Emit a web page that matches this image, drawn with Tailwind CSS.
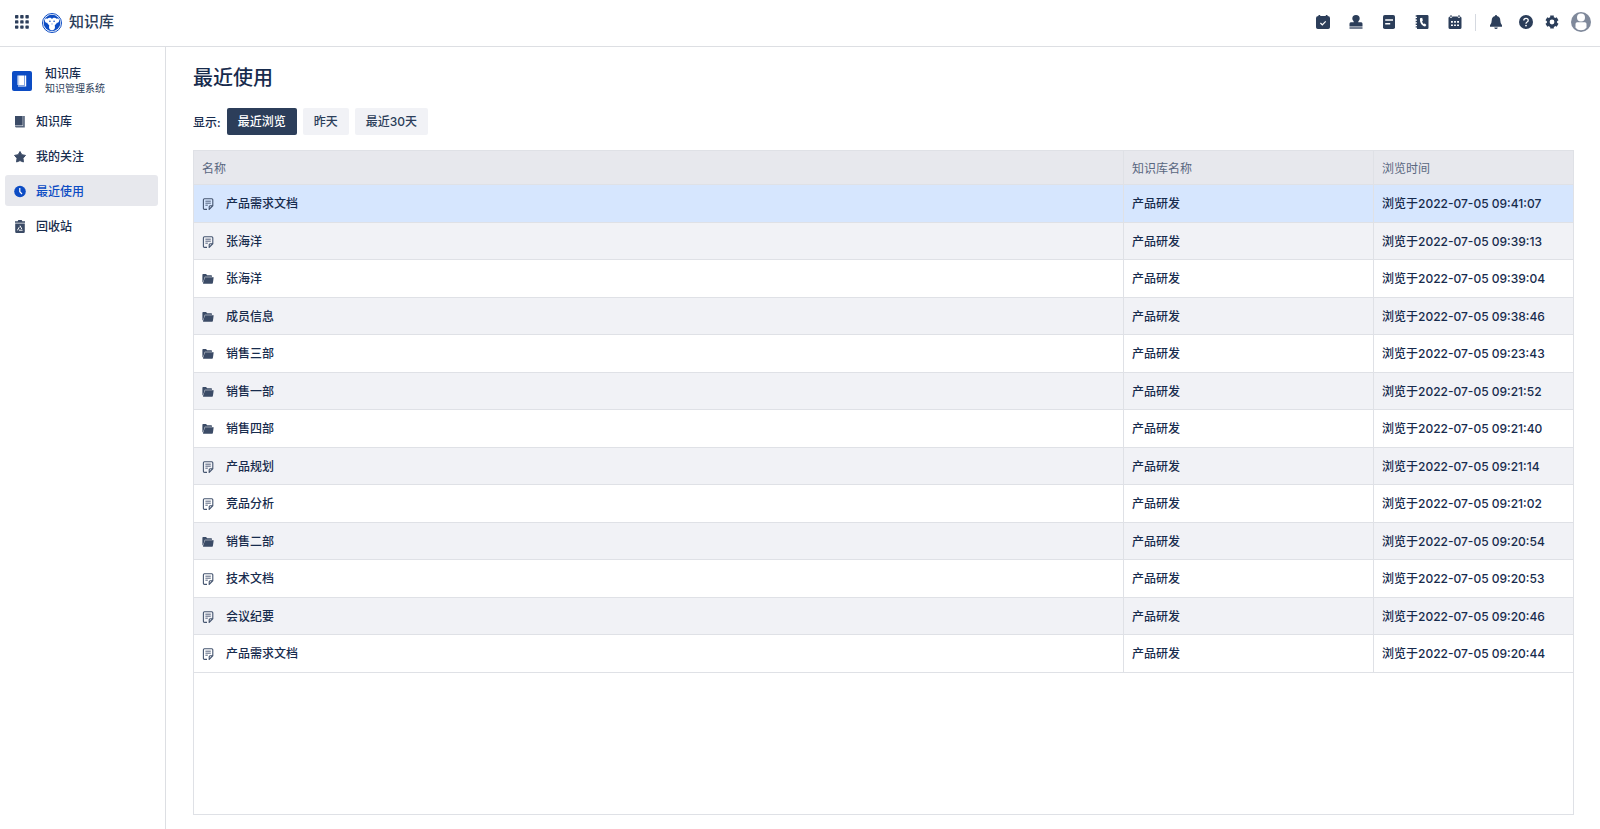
<!DOCTYPE html>
<html lang="zh">
<head>
    <meta charset="UTF-8">
    <meta name="viewport" content="width=device-width, initial-scale=1.0">
    <title>知识库 - 最近使用</title>
    <script src="https://cdn.jsdelivr.net/npm/@tailwindcss/browser@4"></script>
</head>
<body class="flex min-h-screen flex-col bg-white font-['Inter','Noto_Sans_CJK_SC',sans-serif] text-[12px] font-medium text-[#172b4d]">
    <!-- 图标 -->
    <svg class="hidden">
        <symbol id="icon-doc" viewBox="0 0 12 12">
            <path d="M5 11.400H2.600Q1.400 11.400 1.400 10.200V1.700Q1.400.7 2.400.7h7.400q1 0 1 1V7.700L7.200 11.400V8.700q0-1 1-1h2.400" fill="none" stroke="#44546f" stroke-width="1.100"/>
            <path d="M3.400 3.200h5.400M3.400 5.200h5.400M3.400 7.200h2.400" stroke="#44546f" stroke-width=".9"/>
        </symbol>
        <symbol id="icon-folder" viewBox="0 0 12 12">
            <path d="M.4 1.700Q.4 1 1.100 1H4l1.200 1.300h4q.8 0 .8.8v.7H2.800L1.300 8.500.4 9.500Z" fill="#3b4b66"/>
            <path d="M3 4.200h8.700L10.900 10q-.1.700-.8.700H1.500q-.7 0-.5-.7Z" fill="#3b4b66"/>
        </symbol>
    </svg>

    <!-- 顶部导航 -->
    <header class="flex h-[47px] shrink-0 items-center border-b border-[#dddfe3] pr-[9px] pb-[2px] pl-[15px] text-[#2c3e5a]">
        <button aria-label="应用" class="flex">
            <svg class="size-[14px]" viewBox="0 0 14 14" fill="currentColor">
                <rect x="0" y="0" width="3.400" height="3.400" rx=".7"/><rect x="5.200" y="0" width="3.400" height="3.400" rx=".7"/><rect x="10.400" y="0" width="3.400" height="3.400" rx=".7"/>
                <rect x="0" y="5.200" width="3.400" height="3.400" rx=".7"/><rect x="5.200" y="5.200" width="3.400" height="3.400" rx=".7"/><rect x="10.400" y="5.200" width="3.400" height="3.400" rx=".7"/>
                <rect x="0" y="10.400" width="3.400" height="3.400" rx=".7"/><rect x="5.200" y="10.400" width="3.400" height="3.400" rx=".7"/><rect x="10.400" y="10.400" width="3.400" height="3.400" rx=".7"/>
            </svg>
        </button>
        <a href="#" class="ml-[13px] flex items-center gap-[7px] pt-px text-[15px]">
            <svg class="size-5" viewBox="0 0 20 20">
                <circle cx="10" cy="10" r="9.500" fill="#fff" stroke="#0c4cc4" stroke-width="1"/>
                <circle cx="10" cy="10" r="8.300" fill="#0c4cc4"/>
                <path d="M10 6C9 4.300 6.600 4.200 5.500 5.800 3.900 4.900 2.700 6 2.900 7.700 3.100 9.300 4.200 10 5.200 9.700 5.600 11.200 6.900 11.600 7.300 12.500 6.600 14.500 7.200 17.300 10 17.300S13.400 14.500 12.700 12.500C13.100 11.600 14.400 11.200 14.800 9.700 15.800 10 16.900 9.300 17.100 7.700 17.300 6 16.100 4.900 14.500 5.800 13.400 4.200 11 4.300 10 6Z" fill="#fff"/>
                <circle cx="7.900" cy="8.300" r=".8" fill="#0c4cc4"/><circle cx="12.100" cy="8.300" r=".8" fill="#0c4cc4"/>
                <path d="M9.300 10.800 10 11.400l.7-.6" fill="none" stroke="#0c4cc4" stroke-width=".5"/>
            </svg>
            知识库
        </a>
        <nav class="ml-auto flex items-center">
            <div class="flex items-center gap-[19px]">
                <button aria-label="任务">
                    <svg class="size-[14px]" viewBox="0 0 14 14"><path d="M2.500 0h1.700v1h5.600V0h1.700v1.100Q14 1.300 14 3v9.200Q14 14 12.200 14H1.800Q0 14 0 12.200V3Q0 1.300 2.500 1.100Z" fill="currentColor"/><path d="m4.400 8 1.900 1.800 3.400-3.500" fill="none" stroke="#fff" stroke-width="1.200"/></svg>
                </button>
                <button aria-label="审批">
                    <svg class="size-[14px]" viewBox="0 0 14 14" fill="currentColor"><path d="M7 0a3.700 3.700 0 0 1 3.700 3.700C10.700 5.200 9.200 5.800 9.200 7.200h3Q13.500 7.200 13.500 8.700v2.800H.5V8.700Q.5 7.200 1.800 7.200h3C4.800 5.800 3.300 5.200 3.300 3.700A3.700 3.700 0 0 1 7 0Z"/><path d="M.5 12h13v2H.5Z" opacity=".65"/></svg>
                </button>
                <button aria-label="文档">
                    <svg class="size-[14px]" viewBox="0 0 14 14"><rect x="1" width="12" height="14" rx="1.800" fill="currentColor"/><path d="M3.200 5h7.800M3.200 8.700h5" stroke="#fff" stroke-width="1.400"/></svg>
                </button>
                <button aria-label="通讯录">
                    <svg class="size-[14px]" viewBox="0 0 14 14"><path d="M2 0h10.300Q13.500 0 13.500 1.200v11.600q0 1.200-1.200 1.200H2V12.600H.7v-1.400H2V10H.7V8.600H2V7.200H.7V5.800H2V4.400H.7V3H2V1.700H.7V.3H2Z" fill="currentColor"/><path d="M5 3.200C4.500 7.300 6.600 10.900 10.200 11.500l1.200-1.500-1.600-1.600-1.200.6Q7.400 8 7.100 6.200l.8-.8-.7-2.600Z" fill="#fff"/></svg>
                </button>
                <button aria-label="日历">
                    <svg class="size-[14px]" viewBox="0 0 14 14"><path d="M.5 4.800V3.200Q.5 1.400 1.700 1.400q0 1.700 1.300 1.700T4.300 1.400h5.400q0 1.700 1.300 1.700t1.300-1.700Q13.500 1.400 13.500 3.200v9.200Q13.500 14 11.900 14H2.100Q.5 14 .5 12.400Z" fill="currentColor"/><path d="M3 .2v2M11 .2v2" stroke="currentColor" stroke-width="1.300"/><path d="M3 6.900h1.900m1.200 0h1.800m1.200 0H11M3 10.200h1.900m1.200 0h1.800m1.200 0H11" stroke="#fff" stroke-width="1.600"/></svg>
                </button>
            </div>
            <span class="mx-[13px] h-[17px] w-px bg-[#d5d9e0]"></span>
            <button aria-label="通知">
                <svg class="size-[14px]" viewBox="0 0 14 14" fill="currentColor"><path d="M6.200.9V0h1.600v.9Q11.300 1.600 11.300 5.400 11.300 8.500 13 10.200V11.800H1v-1.600Q2.700 8.500 2.700 5.400 2.700 1.600 6.200.9ZM5.200 12.500h3.600Q8.500 14 7 14T5.200 12.500Z"/></svg>
            </button>
            <button aria-label="帮助" class="ml-4">
                <svg class="size-[14px]" viewBox="0 0 14 14"><circle cx="7" cy="7" r="7" fill="currentColor"/><path d="M4.800 5.500Q4.800 3.300 7 3.300t2.200 2Q9.200 6.500 8.100 7T7 8.800" fill="none" stroke="#fff" stroke-width="1.300"/><circle cx="7" cy="10.600" r=".9" fill="#fff"/></svg>
            </button>
            <button aria-label="设置" class="ml-3">
                <svg class="size-[14px]" viewBox="0 0 14 14"><g fill="none" stroke="currentColor"><circle cx="7" cy="7" r="3.800" stroke-width="2.800"/><path d="M7 .5v2.200M7 11.300v2.200M1.400 3.750l1.900 1.100M10.700 9.150l1.900 1.100M1.400 10.250l1.900-1.100M10.700 4.850l1.900-1.100" stroke-width="3.600"/></g></svg>
            </button>
            <button aria-label="我的账户" class="ml-3">
                <svg class="size-5" viewBox="0 0 20 20"><circle cx="10" cy="10" r="10" fill="#7f899b"/><circle cx="10" cy="5.500" r="4" fill="#fff"/><path d="M4.500 12q0-1.700 1.700-1.700h7.600q1.700 0 1.700 1.700v3.800Q13.500 18.300 10 18.300t-5.500-2.500Z" fill="#fff"/></svg>
            </button>
        </nav>
    </header>

    <div class="flex grow">
        <!-- 侧边栏 -->
        <aside class="w-[166px] shrink-0 border-r border-[#dddfe3] pt-[19px] pr-[7px] pl-[5px]">
            <div class="flex items-center gap-[13px] pl-[7px]">
                <svg class="size-5" viewBox="0 0 20 20"><rect width="20" height="20" rx="2" fill="#0c4cc4"/><path d="M5.500 4.500h7v9.500h-7ZM13 4.500h1.200v11H6v-1h7Z" fill="#fff"/><path d="M6.700 4.500v9.500" stroke="#0c4cc4" stroke-width=".3"/></svg>
                <div>
                    <p class="leading-[15px]">知识库</p>
                    <p class="text-[10px] leading-[14px] font-normal text-[#2c3e5a]">知识管理系统</p>
                </div>
            </div>
            <nav class="mt-[10px] flex flex-col gap-1">
                <a href="#" class="flex h-[31px] items-center gap-[9px] rounded-[3px] pt-[2px] pl-2">
                    <svg class="size-[14px]" viewBox="0 0 14 14" fill="#3b4b66"><path d="M2 1h7.700v9.500H2Z"/><path d="M10.100 1h1.700v11.400H3Q2 12.400 2 11.100h8.100Z" opacity=".85"/></svg>
                    知识库
                </a>
                <a href="#" class="flex h-[31px] items-center gap-[9px] rounded-[3px] pt-[2px] pl-2">
                    <svg class="size-[14px]" viewBox="0 0 14 14" fill="#3b4b66" stroke="#3b4b66" stroke-linejoin="round"><path d="m7 1.500 1.800 3.200 3.700.7-2.500 2.800.4 3.800L7 10.600 3.600 12l.4-3.800-2.500-2.800 3.700-.7Z"/></svg>
                    我的关注
                </a>
                <a href="#" class="flex h-[31px] items-center gap-[9px] rounded-[3px] bg-[#e7e8ed] pt-[2px] pl-2 text-[#0c4cc4]">
                    <svg class="size-[14px]" viewBox="0 0 14 14"><circle cx="7" cy="6.500" r="5.800" fill="#0c4cc4"/><path d="M6.800 3v3.700L9 9" fill="none" stroke="#fff" stroke-width="1.200"/></svg>
                    最近使用
                </a>
                <a href="#" class="flex h-[31px] items-center gap-[9px] rounded-[3px] pt-[2px] pl-2">
                    <svg class="size-[14px]" viewBox="0 0 14 14"><path d="M2 1.200h2.700L5.300.1h3.400l.6 1.100H12V2.700H2ZM2.200 3.500h9.600v8.300q0 1.200-1.200 1.200H3.400q-1.200 0-1.200-1.200Z" fill="#3b4b66"/><path d="m7 5.800 2.500 4.400h-5Z" fill="none" stroke="#fff" stroke-dasharray="3.700 1.200"/></svg>
                    回收站
                </a>
            </nav>
        </aside>

        <!-- 主内容 -->
        <main class="flex grow flex-col pt-[15px] pr-[26px] pb-[14px] pl-[27px]">
            <h1 class="text-[20px] leading-8">最近使用</h1>
            <div class="mt-[14px] flex items-center gap-[6px]">
                <span class="pt-[2px]">显示:</span>
                <button class="h-[27px] rounded-[2px] bg-[#2c3e5a] px-[11px] pt-px text-white">最近浏览</button>
                <button class="h-[27px] rounded-[2px] bg-[#f1f2f6] px-[11px] pt-px text-[#2c3e5a]">昨天</button>
                <button class="h-[27px] rounded-[2px] bg-[#f1f2f6] px-[11px] pt-px text-[#2c3e5a]">最近30天</button>
            </div>

            <!-- 浏览记录 -->
            <div class="mt-[15px] grow border border-[#dfe1e6]">
                <table class="w-full table-fixed border-separate border-spacing-0 text-left">
                    <thead>
                        <tr class="h-[34px] bg-[#e7e8ed] text-[#596780] *:border-b *:border-[#dfe1e6] *:pt-[2px] *:pl-2 *:font-normal">
                            <th>名称</th>
                            <th class="w-[250px] border-l">知识库名称</th>
                            <th class="w-[200px] border-l">浏览时间</th>
                        </tr>
                    </thead>
                    <tbody id="records"></tbody>
                </table>
            </div>
        </main>
    </div>

    <script>
        const records = [
            ['doc', '产品需求文档', '09:41:07'],
            ['doc', '张海洋', '09:39:13'],
            ['folder', '张海洋', '09:39:04'],
            ['folder', '成员信息', '09:38:46'],
            ['folder', '销售三部', '09:23:43'],
            ['folder', '销售一部', '09:21:52'],
            ['folder', '销售四部', '09:21:40'],
            ['doc', '产品规划', '09:21:14'],
            ['doc', '竞品分析', '09:21:02'],
            ['folder', '销售二部', '09:20:54'],
            ['doc', '技术文档', '09:20:53'],
            ['doc', '会议纪要', '09:20:46'],
            ['doc', '产品需求文档', '09:20:44'],
        ];

        document.getElementById('records').innerHTML = records.map(([icon, name, time]) => `
            <tr class="odd:h-[38px] even:h-[37px] even:bg-[#f1f2f6] first:bg-[#d6e6fe] *:border-b *:border-[#dfe1e6] *:pt-px *:pl-2">
                <td>
                    <a href="#" class="flex items-center gap-3">
                        <svg class="size-3"><use href="#icon-${icon}"/></svg>
                        ${name}
                    </a>
                </td>
                <td class="border-l">产品研发</td>
                <td class="border-l">浏览于2022-07-05 ${time}</td>
            </tr>`).join('');
    </script>
</body>
</html>
